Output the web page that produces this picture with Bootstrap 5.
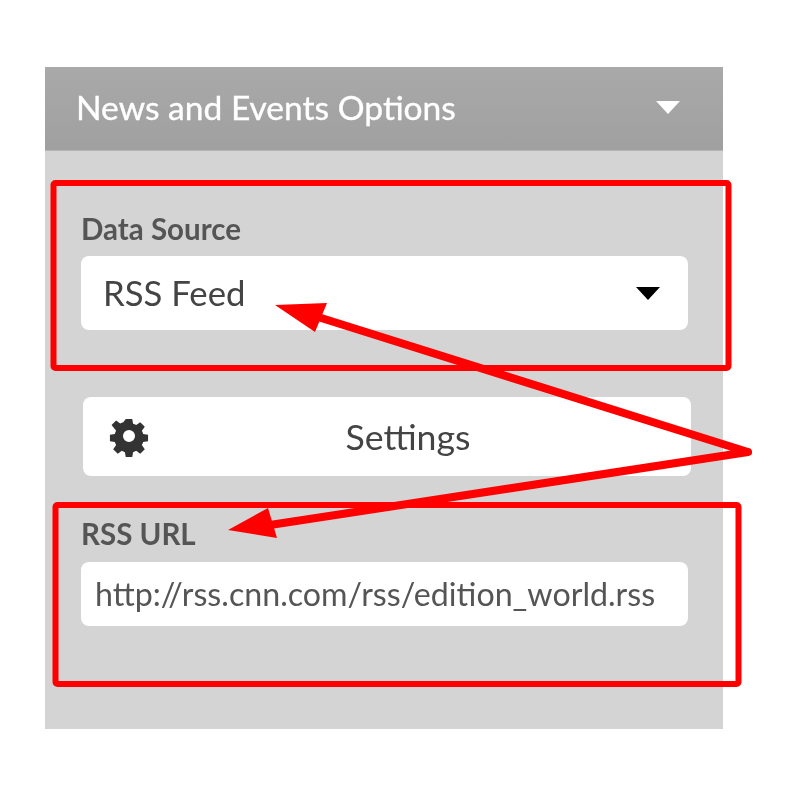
<!DOCTYPE html>
<html lang="en">
<head>
<meta charset="utf-8">
<title>News and Events Options</title>
<link rel="stylesheet" href="https://cdn.jsdelivr.net/npm/bootstrap@5.3.0/dist/css/bootstrap.min.css">
<style>
html,body{background:#fff;margin:0;height:100%;overflow:hidden}
.stage{position:relative;width:793px;height:799px;padding:67px 0 0 45px;font-family:Lato,"Liberation Sans",sans-serif;filter:blur(.7px)}
.opts-panel{width:678px;height:662px;background:#d4d4d4}
.opts-head{height:84px;padding:0 43px 3px 31px;background:linear-gradient(#a9a9a9,#a0a0a0);color:#fff;font-size:33.600px;-webkit-text-stroke:.35px #fff;border-bottom:1px solid #b5b5b5}
.tri{width:0;height:0;border-left:12px solid transparent;border-right:12px solid transparent}
.tri-w{border-top:13px solid #fff}
.tri-k{border-top:13px solid #000}
.opts-body{padding:0 35px 0 36px}
.f-label{display:block;font-size:29.500px;font-weight:700;color:#555;line-height:32px;margin:0}
.f-select{height:74px;background:#fff;border-radius:8px;padding:0 28px 0 22px;font-size:34.700px;color:#444;margin-top:11px}
.f-btn{position:relative;width:608px;height:79px;background:#fff;border-radius:8px;margin:67px 0 0 2px;padding-left:42px;font-size:35.700px;color:#444}
.f-btn svg{position:absolute;left:23px;top:16px}
.f-input{height:64px;background:#fff;border-radius:8px;padding:0 14px;font-size:32.200px;color:#555;margin-top:12px}
.lab-1{padding-top:62px}
.lab-2{margin-top:42px}
.marks{position:absolute;left:0;top:0}
</style>
</head>
<body>
<div class="stage">
  <div class="opts-panel">
    <div class="opts-head d-flex align-items-center justify-content-between">
      <span>News and Events Options</span>
      <span class="tri tri-w"></span>
    </div>
    <div class="opts-body">
      <label class="f-label lab-1">Data Source</label>
      <div class="f-select d-flex align-items-center justify-content-between">
        <span>RSS Feed</span>
        <span class="tri tri-k"></span>
      </div>
      <div class="f-btn d-flex align-items-center justify-content-center">
        <svg width="46" height="46" viewBox="0 0 24 24" aria-hidden="true"><path fill="#333" fill-rule="evenodd" d="M10 1.5h4l.5 3a8 8 0 0 1 1.900.8l2.500-1.800 2.800 2.800-1.800 2.500a8 8 0 0 1 .8 1.900l3 .5v4l-3 .5a8 8 0 0 1-.8 1.900l1.800 2.500-2.800 2.800-2.500-1.800a8 8 0 0 1-1.900.8l-.5 3h-4l-.5-3a8 8 0 0 1-1.900-.8l-2.500 1.800-2.800-2.800 1.800-2.500a8 8 0 0 1-.8-1.900l-3-.5v-4l3-.5a8 8 0 0 1 .8-1.900L1.300 5.300l2.800-2.800 2.500 1.800a8 8 0 0 1 1.900-.8zM12 8.300a3.700 3.700 0 1 0 0 7.400 3.700 3.700 0 0 0 0-7.400z" transform="translate(1.800 1.800) scale(.85)"/></svg>
        <span>Settings</span>
      </div>
      <label class="f-label lab-2">RSS URL</label>
      <div class="f-input d-flex align-items-center">http://rss.cnn.com/rss/edition_world.rss</div>
    </div>
  </div>
  <svg class="marks" width="793" height="799" viewBox="0 0 793 799" aria-hidden="true">
    <rect x="53.500" y="183" width="675" height="185" rx="2" fill="none" stroke="#f00" stroke-width="6"/>
    <rect x="55.500" y="505" width="683" height="179" rx="2" fill="none" stroke="#f00" stroke-width="6"/>
    <path d="M748 452L318 317M748 452L270 525" fill="none" stroke="#f00" stroke-width="8" stroke-linecap="round" stroke-linejoin="round"/>
    <path d="M275 305L327 303L315 332Z M228 530L268 508L277 538Z" fill="#f00"/>
  </svg>
</div>
<script src="https://cdn.jsdelivr.net/npm/bootstrap@5.3.0/dist/js/bootstrap.bundle.min.js"></script>
</body>
</html>
